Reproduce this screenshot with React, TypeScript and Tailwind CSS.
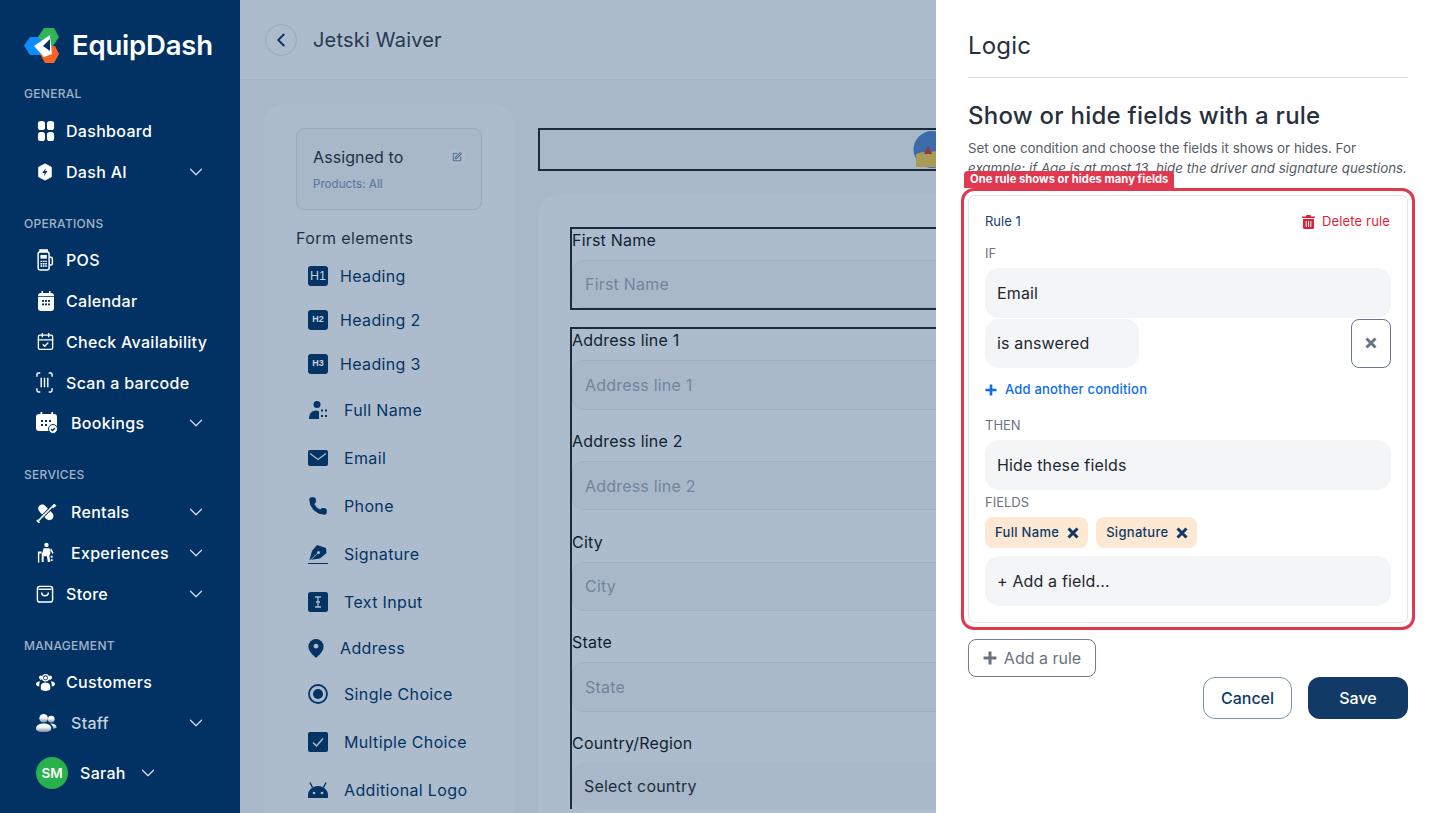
import { CalendarCheck, ChevronDown, ChevronLeft, Phone, SquarePen } from "lucide-react";
import type { ReactNode } from "react";

const font = "font-['Inter','Liberation_Sans',sans-serif]";

function Dots() {
  return (
    <svg viewBox="0 0 18 21" className="size-[20px]" fill="white">
      <rect x="0.5" y="0" width="7.5" height="9.5" rx="3" />
      <rect x="10" y="0" width="7.5" height="9.5" rx="3" />
      <rect x="0.5" y="11.5" width="7.5" height="9.5" rx="3" />
      <rect x="10" y="11.5" width="7.5" height="9.5" rx="3" />
    </svg>
  );
}

function DashAi() {
  return (
    <svg viewBox="0 0 20 20" className="size-[18px]">
      <path d="M10 1l7 3.6v10.8L10 19l-7-3.6V4.600z" fill="white" stroke="white" strokeLinejoin="round" />
      <path d="M10.800 5.500L7 11h2.600L8.800 14.800 12.800 9h-2.600z" fill="#013263" />
    </svg>
  );
}

function Pos() {
  return (
    <svg viewBox="0 0 18 24" className="h-[22px] w-[18px]" fill="none" stroke="white" strokeWidth="1.600">
      <rect x="1.500" y="3" width="12" height="20" rx="2.500" />
      <path d="M3.500 1h8v2h-8z" fill="white" />
      <path d="M14 9h1.500a1.500 1.500 0 011.500 1.500V16a1.500 1.500 0 01-1.500 1.500H14" />
      <rect x="4" y="6.500" width="7" height="4" fill="white" stroke="none" />
      <path d="M4 13.500h7M4 16h7M4 18.500h7" strokeDasharray="2 .6" />
    </svg>
  );
}

function CalendarTall() {
  return (
    <svg viewBox="0 0 16 20" className="ml-[2px] h-[20px] w-[16px]">
      <path d="M3.500 0h1.500v2h6V0h1.500v2H13a3 3 0 013 3v12a3 3 0 01-3 3H3a3 3 0 01-3-3V5a3 3 0 013-3h.500z" fill="white" />
      <path d="M0 5.500h16" stroke="#013263" strokeWidth="0.800" />
      <g fill="#013263">
        <rect x="4" y="9" width="2" height="1.800" />
        <rect x="7" y="9" width="2" height="1.800" />
        <rect x="10" y="9" width="2" height="1.800" />
        <rect x="4" y="12.500" width="2" height="1.800" />
        <rect x="7" y="12.500" width="2" height="1.800" />
        <rect x="10" y="12.500" width="2" height="1.800" />
      </g>
    </svg>
  );
}

function BookingsIcon() {
  return (
    <svg viewBox="0 0 22 22" className="size-[22px]">
      <path d="M4.500 0h1.800v2h9V0h1.800v2H18a3 3 0 013 3v11a3 3 0 01-3 3H3a3 3 0 01-3-3V5a3 3 0 013-3h1.500z" fill="white" />
      <g fill="#013263">
        <rect x="5" y="8" width="2" height="2" />
        <rect x="9" y="8" width="2" height="2" />
        <rect x="13" y="8" width="2" height="2" />
        <rect x="5" y="12" width="2" height="2" />
        <rect x="9" y="12" width="2" height="2" />
      </g>
      <circle cx="17" cy="17" r="4.500" fill="white" stroke="#013263" strokeWidth="1" />
      <path d="M15 17l1.500 1.500L19 16" fill="none" stroke="#013263" strokeWidth="1.300" />
    </svg>
  );
}

function Scan() {
  return (
    <svg viewBox="0 0 18 22" className="h-[21px] w-[17px]" fill="none" stroke="white" strokeWidth="1.500">
      <path d="M4.500 1H2.500a1.500 1.500 0 00-1.500 1.500V5M13.500 1h2a1.500 1.500 0 011.500 1.500V5M4.500 21H2.500A1.500 1.500 0 011 19.500V17M13.500 21h2a1.500 1.500 0 001.500-1.500V17" />
      <path d="M5.500 6v10M9 6v10M12.500 6v10" />
    </svg>
  );
}

function Paddle() {
  return (
    <svg viewBox="0 0 22 22" className="size-[21px]" fill="white">
      <path d="M3 4.500C5 2 8 2 9.500 4l8 8c2 3 0 7-3.500 7-2 0-4-1.500-5-3-2.500-3-5-5-6-7-1-1.500-1-3 0-4.500z" />
      <path d="M2 20L20 2" stroke="#013263" strokeWidth="3.600" />
      <path d="M2.500 19.500L19.500 2.500" stroke="white" strokeWidth="1.600" />
      <path d="M17 5.500l2.500-3.500 2 2-3.500 2.500zM1 18l3.500 3.500-2 .5-2-2z" />
    </svg>
  );
}

function Hiker() {
  return (
    <svg viewBox="0 0 20 22" className="h-[22px] w-[19px]" fill="white">
      <circle cx="11" cy="2.500" r="2.300" />
      <path d="M8 6h5.500c.8 0 1.500.6 1.500 1.500V12l-1 1.500 1 7h-2.500l-1-6H8v6H6v-8c0-1 .5-1.500 1-2.500z" />
      <path d="M2 9.500h4v2H3.500V21H2z" />
      <path d="M16 6l2.500 5-1.300.8L15 8zM15.500 14h2v2h-2zM15.500 17.500h2v2h-2z" />
    </svg>
  );
}

function Bag() {
  return (
    <svg viewBox="0 0 18 20" className="h-[19px] w-[18px]" fill="none" stroke="white" strokeWidth="1.500">
      <rect x="1" y="2.500" width="16" height="16.500" rx="2.500" />
      <path d="M2 5.500h14" />
      <path d="M5.500 9c0 4.500 7 4.500 7 0" />
    </svg>
  );
}

function People() {
  return (
    <svg viewBox="0 0 20 18" className="h-[17px] w-[19px]" fill="white">
      <circle cx="10" cy="4" r="3.300" fill="none" stroke="white" strokeWidth="1.400" />
      <circle cx="10" cy="4" r="1.700" />
      <path d="M4.500 1.500a2.500 2.500 0 01.500 4.900A5 5 0 013 4a2.500 2.500 0 011.500-2.500zM15.500 1.500A2.500 2.500 0 0015 6.400 5 5 0 0017 4a2.500 2.500 0 00-1.500-2.500z" />
      <path d="M5 13c0-2.700 2.200-4 5-4s5 1.300 5 4v3c0 1.200-2.200 2-5 2s-5-.8-5-2zM0 10.500C0 8.500 2 8 4.500 8 3.500 9.200 3.200 11 3.500 13 1.200 13 0 12 0 10.500zM20 10.500c0-2-2-2.500-4.500-2.500 1 1.200 1.300 3 1 5 2.300 0 3.500-1 3.500-2.500z" />
    </svg>
  );
}

function Staff() {
  return (
    <svg viewBox="0 0 22 20" className="h-[20px] w-[21px]">
      <defs>
        <linearGradient id="staffFade" x1="0" y1="0" x2="0" y2="1">
          <stop offset="0.400" stopColor="white" />
          <stop offset="1" stopColor="white" stopOpacity="0.450" />
        </linearGradient>
      </defs>
      <g fill="url(#staffFade)">
        <circle cx="8" cy="5" r="4.500" />
        <circle cx="16" cy="6" r="3.500" />
        <path d="M0 16c0-3.500 3.500-5.500 8-5.500s8 2 8 5.500c0 2.500-3.500 3.500-8 3.500S0 18.500 0 16z" />
        <path d="M15 10.500c3.500 0 6.500 1.500 6.500 4 0 1-1 1.500-3.500 1.500 0-2-1-4-3-5.500z" />
      </g>
    </svg>
  );
}

function NavRow({ icon, label, chevron, wide, muted }: { icon: ReactNode; label: string; chevron?: boolean; wide?: boolean; muted?: boolean }) {
  return (
    <div className="flex h-[40.750px] items-center pr-[33px] pl-[36px]">
      <span className={`flex shrink-0 items-center justify-start ${wide ? "w-[35px]" : "w-[30px]"}`}>{icon}</span>
      <span className={`text-[16px] font-medium tracking-[0.3px] whitespace-nowrap ${muted ? "text-[#c4d0dd]" : "text-white"}`}>{label}</span>
      {chevron && <ChevronDown className="ml-auto size-[22px] text-[#d7dfe8]" strokeWidth={1.300} />}
    </div>
  );
}

function Section({ title, children }: { title: string; children: ReactNode }) {
  return (
    <div className="mb-[21.500px]">
      <div className="mb-[6.500px] pl-[24px] text-[12px] leading-[20px] font-medium tracking-[0.3px] text-[#a2b2c6]">{title}</div>
      {children}
    </div>
  );
}

function Sidebar() {
  return (
    <aside className="relative h-full w-[240px] shrink-0 bg-[#013263]">
      <div className="flex h-[84px] items-center gap-[12px] pt-[7px] pl-[24px]">
        <svg viewBox="24 27 36 36" className="size-[36px]">
          <path d="M24 44.500L30 36h14l-4 9 4 9H30z" fill="#0d8dfb" />
          <path d="M38 36l6-9h10l5 9-6 9h-8z" fill="#2fb457" />
          <path d="M40 53l6-8h9l4 8-5 9h-9z" fill="#f96324" />
          <path d="M34 45l16-11 2 19-8 3z" fill="white" />
          <path d="M43 45l7-7v12z" fill="#013263" />
        </svg>
        <span className="text-[27.500px] leading-none font-semibold tracking-[-0.2px] text-white">EquipDash</span>
      </div>
      <Section title="GENERAL">
        <NavRow icon={<Dots />} label="Dashboard" />
        <NavRow icon={<DashAi />} label="Dash AI" chevron />
      </Section>
      <Section title="OPERATIONS">
        <NavRow icon={<Pos />} label="POS" />
        <NavRow icon={<CalendarTall />} label="Calendar" />
        <NavRow icon={<CalendarCheck className="size-[19px] text-white" strokeWidth={1.700} />} label="Check Availability" />
        <NavRow icon={<Scan />} label="Scan a barcode" />
        <NavRow icon={<BookingsIcon />} label="Bookings" chevron wide />
      </Section>
      <Section title="SERVICES">
        <NavRow icon={<Paddle />} label="Rentals" chevron wide />
        <NavRow icon={<Hiker />} label="Experiences" chevron wide />
        <NavRow icon={<Bag />} label="Store" chevron />
      </Section>
      <Section title="MANAGEMENT">
        <NavRow icon={<People />} label="Customers" />
        <NavRow icon={<Staff />} label="Staff" chevron wide muted />
      </Section>
      <div className="absolute right-[24px] bottom-[12px] left-[24px] flex h-[56px] items-center rounded-t-lg bg-[#013263] pl-[12px]">
        <span className="flex size-[32px] items-center justify-center rounded-full bg-[#28b14c] text-[13.500px] font-semibold text-white">SM</span>
        <span className="ml-[12px] text-[16px] font-medium tracking-[0.3px] text-white">Sarah</span>
        <ChevronDown className="ml-[11px] size-[22px] text-[#d7dfe8]" strokeWidth={1.300} />
      </div>
    </aside>
  );
}

function Boxed({ d, w = "size-[20px]" }: { d: ReactNode; w?: string }) {
  return (
    <svg viewBox="0 0 20 20" className={w}>
      {d}
    </svg>
  );
}

const ink = "#033463";
const formIcons: Record<string, ReactNode> = {
  name: (
    <Boxed
      d={
        <g fill={ink}>
          <circle cx="9" cy="4.500" r="3.500" />
          <path d="M1 19c0-5 2.500-8.500 7-8.500 1 0 2 .2 3 .8V19z" />
          <path d="M13 9.500h2v2h-2zM17 9.500h2v2h-2zM13 15h2v2h-2zM17 15h2v2h-2z" />
        </g>
      }
    />
  ),
  email: (
    <Boxed
      d={
        <>
          <rect y="2" width="20" height="16" rx="2" fill={ink} />
          <path d="M2 5.500l8 6 8-6" fill="none" stroke="#adbccd" strokeWidth="1.200" />
        </>
      }
    />
  ),
  signature: (
    <Boxed
      d={
        <>
          <path d="M1.500 16L4 7l5-6 9 3 .5 5-6.500 5.500z" fill={ink} />
          <path d="M2 16.500l8-7.500" stroke="#adbccd" strokeWidth="0.900" />
          <circle cx="10.500" cy="8.500" r="1.500" fill="#adbccd" />
          <path d="M0 19.500h20" stroke={ink} strokeWidth="1" />
        </>
      }
    />
  ),
  text: (
    <Boxed
      d={
        <>
          <rect width="20" height="20" rx="2.500" fill={ink} />
          <path d="M7 5h6M7 15h6M10 5v10M8 10h4" stroke="#adbccd" strokeWidth="1.300" fill="none" />
        </>
      }
    />
  ),
  address: (
    <svg viewBox="0 0 16 20" className="h-[19px] w-[16px]">
      <path d="M8 0a8 8 0 018 8c0 4.500-4.500 9-8 12C4.500 17 0 12.500 0 8a8 8 0 018-8z" fill={ink} />
      <circle cx="8" cy="7.500" r="2.500" fill="#adbccd" />
    </svg>
  ),
  single: (
    <Boxed
      d={
        <>
          <circle cx="10" cy="10" r="9" fill="none" stroke={ink} strokeWidth="1.800" />
          <circle cx="10" cy="10" r="5" fill={ink} />
        </>
      }
    />
  ),
  multi: (
    <Boxed
      d={
        <>
          <rect width="20" height="20" rx="2" fill={ink} />
          <path d="M5 10.500l3.500 3.500L15 6.500" fill="none" stroke="#adbccd" strokeWidth="1.500" />
        </>
      }
    />
  ),
  logo: (
    <Boxed
      d={
        <g fill={ink}>
          <path d="M0 18v-3c0-5 4.500-9 10-9s10 4 10 9v3z" />
          <path d="M4.500 7.500L2 2.500M15.500 7.500L18 2.500" stroke={ink} strokeWidth="1.400" />
          <circle cx="6" cy="13" r="1.300" fill="#adbccd" />
          <circle cx="14" cy="13" r="1.300" fill="#adbccd" />
        </g>
      }
    />
  ),
};

function HeadBadge({ label, small }: { label: string; small?: boolean }) {
  return (
    <span
      className={`flex size-[20px] items-center justify-center rounded-[3px] bg-[#033463] text-[#c5d2e0] ${
        small ? "text-[9px] font-bold" : "text-[12.500px] font-medium"
      } font-['Liberation_Sans',sans-serif]`}
    >
      {label}
    </span>
  );
}

function FormItem({ icon, label, h, tight }: { icon: ReactNode; label: string; h: string; tight?: boolean }) {
  return (
    <div className={`flex items-center pl-[12px] ${h}`}>
      <span className={`flex shrink-0 items-center ${tight ? "w-[32px]" : "w-[36px]"}`}>{icon}</span>
      <span className="text-[16px] tracking-[0.35px] text-[#033463]">{label}</span>
    </div>
  );
}

function ElementsPanel() {
  return (
    <div className="h-[760px] w-[250px] shrink-0 rounded-t-[20px] bg-[#adbccd] px-[32px] pt-[24px]">
      <div className="h-[82px] rounded-lg border border-[#97a9bd] bg-[#a8b8c9] px-[16px] pt-[15px]">
        <div className="flex items-center justify-between">
          <span className="text-[16px] leading-[26px] tracking-[0.1px] text-[#1f3145]">Assigned to</span>
          <span className="flex size-[16px] items-center justify-center rounded-[3px] bg-[#adbccd] text-[#4f7098]">
            <SquarePen className="size-[10px]" strokeWidth={2.500} />
          </span>
        </div>
        <div className="mt-[6px] text-[11.500px] font-medium text-[#5e7da3]">Products: All</div>
      </div>
      <div className="mt-[18px] text-[16px] leading-[20px] tracking-[0.4px] text-[#1f3145]">Form elements</div>
      <div className="mt-[6px]">
        <FormItem h="h-[44px]" tight icon={<HeadBadge label="H1" />} label="Heading" />
        <FormItem h="h-[44px]" tight icon={<HeadBadge label="H2" small />} label="Heading 2" />
        <FormItem h="h-[44px]" tight icon={<HeadBadge label="H3" small />} label="Heading 3" />
        <FormItem h="h-[48px]" icon={formIcons.name} label="Full Name" />
        <FormItem h="h-[48px]" icon={formIcons.email} label="Email" />
        <FormItem h="h-[48px]" icon={<Phone className="size-[20px] fill-[#033463] text-[#033463]" strokeWidth={1} />} label="Phone" />
        <FormItem h="h-[48px]" icon={formIcons.signature} label="Signature" />
        <FormItem h="h-[48px]" icon={formIcons.text} label="Text Input" />
        <FormItem h="h-[44px]" tight icon={formIcons.address} label="Address" />
        <FormItem h="h-[48px]" icon={formIcons.single} label="Single Choice" />
        <FormItem h="h-[48px]" icon={formIcons.multi} label="Multiple Choice" />
        <FormItem h="h-[48px]" icon={formIcons.logo} label="Additional Logo" />
      </div>
    </div>
  );
}

function Field({ label, placeholder, select, last }: { label: string; placeholder: string; select?: boolean; last?: boolean }) {
  return (
    <div className={last ? "" : "mb-[20.250px]"}>
      <div className="h-[31px] text-[16px] leading-[22px] tracking-[0.2px] text-[#111f30]">{label}</div>
      <div
        className={
          select
            ? "flex h-[46px] items-center rounded-xl bg-[#a8b8c9] pl-[12px] text-[16px] tracking-[0.2px] text-[#1e2d3f]"
            : `flex items-center rounded-xl border border-[#9fb0c3] bg-[#a8b8c9] pl-[12px] text-[16px] tracking-[0.2px] text-[#72859c] ${last ? "h-[48px]" : "h-[49.500px]"}`
        }
      >
        {placeholder}
      </div>
    </div>
  );
}

function BackgroundPage() {
  return (
    <div className="h-full w-[696px] shrink-0 overflow-hidden bg-[#a8b8c9]">
      <div className="flex h-[80px] items-center border-b border-[#a3b3c5] bg-[#adbccd] pl-[25px]">
        <span className="flex size-[32px] items-center justify-center rounded-full border border-[#97a9bd]">
          <ChevronLeft className="size-[22px] text-[#033463]" strokeWidth={2} />
        </span>
        <span className="ml-[16px] text-[20px] tracking-[0.2px] text-[#27394d]">Jetski Waiver</span>
      </div>
      <div className="flex w-[760px] gap-[24px] pt-[24px] pl-[24px]">
        <ElementsPanel />
        <div className="w-[460px] pt-[24px]">
          <div className="flex h-[43px] items-center justify-end overflow-hidden border-2 border-[#1a2b3d] pr-[43px]">
            <svg viewBox="0 0 40 40" className="size-[40px] shrink-0">
              <circle cx="19" cy="19.500" r="18.500" fill="#3b6ba8" />
              <path d="M3 24q8-3 14-2q10-2 23 1V37H3z" fill="#a99a57" />
              <path d="M11 24l4-8 4 8z" fill="#8a3a46" />
            </svg>
          </div>
          <div className="mt-[24px] h-[640px] rounded-t-[20px] bg-[#adbccd] px-[32px] pt-[32px]">
            <div className="h-[83px] w-[460px] border-2 border-[#1a2b3d]">
              <Field label="First Name" placeholder="First Name" last />
            </div>
            <div className="mt-[17px] w-[460px] border-2 border-b-0 border-[#1a2b3d]">
              <Field label="Address line 1" placeholder="Address line 1" />
              <Field label="Address line 2" placeholder="Address line 2" />
              <Field label="City" placeholder="City" />
              <Field label="State" placeholder="State" />
              <Field label="Country/Region" placeholder="Select country" select />
            </div>
          </div>
        </div>
      </div>
    </div>
  );
}

function Select({ label, className = "" }: { label: string; className?: string }) {
  return <div className={`flex h-[49.500px] items-center rounded-[14px] bg-[#f4f5f7] pl-[12px] text-[16px] tracking-[0.15px] text-[#1f2733] ${className}`}>{label}</div>;
}

function Cross({ className }: { className: string }) {
  return (
    <svg viewBox="0 0 12 12" className={className} fill="none" stroke="currentColor" strokeWidth="3">
      <path d="M1.500 1.500l9 9M10.500 1.500l-9 9" />
    </svg>
  );
}

function PlusMark({ className }: { className: string }) {
  return (
    <svg viewBox="0 0 12 12" className={className} fill="none" stroke="currentColor" strokeWidth="2.600">
      <path d="M6 0.500v11M0.500 6h11" />
    </svg>
  );
}

function TrashMark() {
  return (
    <svg viewBox="0 0 13 14" className="h-[14px] w-[13px]" fill="#e11d38">
      <path d="M4.500 0h4l.5 1.500h4V3H0V1.500h4z" />
      <path d="M1 4h11v8.500a1.500 1.500 0 01-1.500 1.500h-8A1.500 1.500 0 011 12.500z" />
      <path d="M4.200 6v6M6.500 6v6M8.800 6v6" stroke="white" strokeWidth="1" />
    </svg>
  );
}

function Chip({ label }: { label: string }) {
  return (
    <span className="flex h-[31px] items-center gap-[8px] rounded-lg bg-[#fde8d4] pr-[9px] pl-[10px] text-[13px] font-medium tracking-[0.3px] text-[#0f3a66]">
      {label}
      <Cross className="size-[12px]" />
    </span>
  );
}

function FieldLabel({ children }: { children: ReactNode }) {
  return <div className="text-[13px] leading-[16px] text-[#6b7280]">{children}</div>;
}

function LogicDrawer() {
  return (
    <div className="h-full w-[504px] shrink-0 bg-white px-[32px]">
      <div className="flex h-[78px] items-center border-b border-[#d9dce1] pt-[18px] pb-[4px] text-[24px] tracking-[0.2px] text-[#27303d]">Logic</div>
      <div className="mt-[22px] text-[24px] leading-[32px] font-medium tracking-[0.25px] text-[#27303d]">Show or hide fields with a rule</div>
      <p className="mt-[6px] text-[13.350px] leading-[20px] text-[#555b65]">
        Set one condition and choose the fields it shows or hides. For
        <br />
        <em className="whitespace-nowrap">example: if Age is at most 13, hide the driver and signature questions.</em>
      </p>
      <div className="relative mt-[17px] h-[428px] rounded-md border border-[#e3e5e9] bg-white px-[16px] pt-[16px] outline-3 outline-offset-[4px] outline-[#e0384f]">
        <span className="absolute top-[-25px] left-[-5px] flex h-[17px] items-center rounded-t-sm bg-[#e0384f] px-[6px] text-[11.250px] font-bold whitespace-nowrap text-white">
          One rule shows or hides many fields
        </span>
        <div className="flex h-[20px] items-center justify-between pr-[1px]">
          <span className="text-[13px] text-[#12406f]">Rule 1</span>
          <span className="flex items-center gap-[7px] text-[13px] tracking-[0.15px] text-[#e11d38]">
            <TrashMark />
            Delete rule
          </span>
        </div>
        <div className="mt-[13px] mb-[7px]">
          <FieldLabel>IF</FieldLabel>
        </div>
        <Select label="Email" />
        <div className="mt-[1px] flex items-center justify-between">
          <Select label="is answered" className="w-[154px]" />
          <span className="flex h-[49.500px] w-[40px] items-center justify-center rounded-lg border border-[#69758a] text-[#69758a]">
            <Cross className="size-[12px]" />
          </span>
        </div>
        <div className="mt-[12px] flex h-[20px] items-center gap-[8px] text-[13px] font-medium tracking-[0.2px] text-[#0a6cf0]">
          <PlusMark className="size-[12px]" />
          Add another condition
        </div>
        <div className="mt-[17px] mb-[7px]">
          <FieldLabel>THEN</FieldLabel>
        </div>
        <Select label="Hide these fields" />
        <div className="mt-[4.500px] mb-[7px]">
          <FieldLabel>FIELDS</FieldLabel>
        </div>
        <div className="flex gap-[8px]">
          <Chip label="Full Name" />
          <Chip label="Signature" />
        </div>
        <Select label="+ Add a field..." className="mt-[8px]" />
      </div>
      <button className="mt-[16px] flex h-[38px] w-[128px] items-center justify-center gap-[7px] rounded-lg border border-[#737f92] text-[16px] text-[#6b7280]">
        <PlusMark className="size-[14px]" />
        Add a rule
      </button>
      <div className="flex justify-end gap-[16px]">
        <button className="h-[42px] w-[89px] rounded-xl border border-[#7b93b1] text-[16px] font-medium text-[#0f3a66]">Cancel</button>
        <button className="h-[42px] w-[100px] rounded-xl bg-[#113b66] text-[16px] font-medium text-white">Save</button>
      </div>
    </div>
  );
}

export default function App() {
  return (
    <div className={`flex h-[813px] w-[1440px] overflow-hidden ${font}`}>
      <Sidebar />
      <BackgroundPage />
      <LogicDrawer />
    </div>
  );
}
